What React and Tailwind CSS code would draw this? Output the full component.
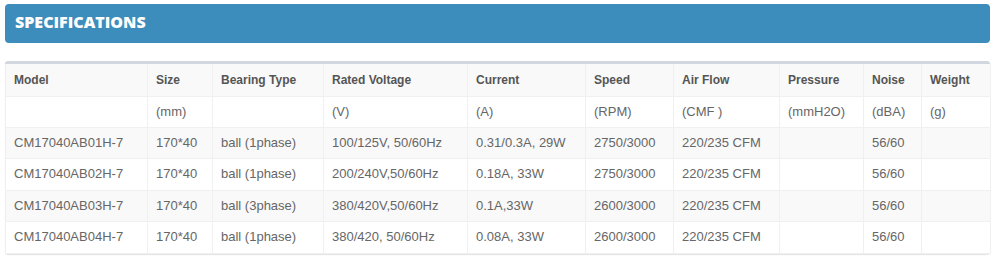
const columns = [
  { head: "Model", unit: "", w: "w-[142px]" },
  { head: "Size", unit: "(mm)", w: "w-[65px]" },
  { head: "Bearing Type", unit: "", w: "w-[111px]" },
  { head: "Rated Voltage", unit: "(V)", w: "w-[144px]" },
  { head: "Current", unit: "(A)", w: "w-[118px]" },
  { head: "Speed", unit: "(RPM)", w: "w-[88px]" },
  { head: "Air Flow", unit: "(CMF )", w: "w-[106px]" },
  { head: "Pressure", unit: "(mmH2O)", w: "w-[84px]" },
  { head: "Noise", unit: "(dBA)", w: "w-[58px]" },
  { head: "Weight", unit: "(g)", w: "w-[69px]" },
];

const rows = [
  ["CM17040AB01H-7", "170*40", "ball (1phase)", "100/125V, 50/60Hz", "0.31/0.3A, 29W", "2750/3000", "220/235 CFM", "", "56/60", ""],
  ["CM17040AB02H-7", "170*40", "ball (1phase)", "200/240V,50/60Hz", "0.18A, 33W", "2750/3000", "220/235 CFM", "", "56/60", ""],
  ["CM17040AB03H-7", "170*40", "ball (3phase)", "380/420V,50/60Hz", "0.1A,33W", "2600/3000", "220/235 CFM", "", "56/60", ""],
  ["CM17040AB04H-7", "170*40", "ball (1phase)", "380/420, 50/60Hz", "0.08A, 33W", "2600/3000", "220/235 CFM", "", "56/60", ""],
];

const heights = ["h-[31px]", "h-[32px]", "h-[31px]", "h-[32px]"];

export default function App() {
  return (
    <div className="w-[1000px] h-[264px] bg-white pt-[4px] px-[5px] font-['Liberation_Sans',Arial,sans-serif]">
      <div className="h-[39px] w-[985px] rounded-[4px] bg-[#3c8dbc] pl-[10px] pb-[4px] flex items-center">
        <h2 className="text-white font-extrabold text-[16px] font-['Open_Sans',sans-serif]">
          SPECIFICATIONS
        </h2>
      </div>

      <div className="mt-[18px] w-[985px] border-t-[3px] border-[#d2d6de] rounded-[3px] shadow-[0_1px_1px_rgba(0,0,0,0.12)]">
        <table className="w-[985px] table-fixed border-collapse text-[13px]">
          <colgroup>
            {columns.map((c) => (
              <col key={c.head} className={c.w} />
            ))}
          </colgroup>
          <tbody>
            <tr className="h-[32px] bg-[#f9f9f9]">
              {columns.map((c) => (
                <th key={c.head} className="border border-[#f0f0f0] border-t-0 px-2 py-0 text-left text-[12px] font-bold text-[#555]">
                  {c.head}
                </th>
              ))}
            </tr>
            <tr className="h-[31px] bg-white">
              {columns.map((c) => (
                <td key={c.head} className="border border-[#f0f0f0] px-2 py-0 text-[#666]">
                  {c.unit}
                </td>
              ))}
            </tr>
            {rows.map((r, i) => (
              <tr key={r[0]} className={`${heights[i]} ${i % 2 === 0 ? "bg-[#f9f9f9]" : "bg-white"}`}>
                {r.map((v, j) => (
                  <td key={j} className="border border-[#f0f0f0] px-2 py-0 text-[#666] whitespace-nowrap">
                    {v}
                  </td>
                ))}
              </tr>
            ))}
          </tbody>
        </table>
      </div>
    </div>
  );
}
